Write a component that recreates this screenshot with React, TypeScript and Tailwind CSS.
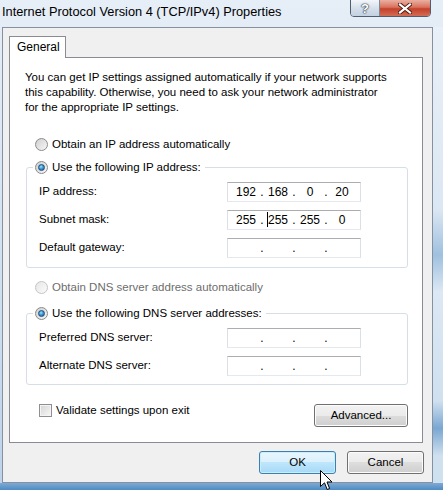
import React from 'react';

const font = "font-['Liberation_Sans',Arial,sans-serif]";

function Radio({ checked, disabled }: { checked?: boolean; disabled?: boolean }) {
  return (
    <span
      className={
        'relative inline-flex items-center justify-center w-[13px] h-[13px] rounded-full border shrink-0 ' +
        (disabled
          ? 'border-[#c4c4c4] bg-linear-to-br from-[#e6e6e6] to-[#fbfbfb]'
          : 'border-[#8a8a8a] bg-linear-to-br from-[#cfcfcf] to-[#f8f8f8]')
      }
    >
      {checked && (
        <span className="w-[7px] h-[7px] rounded-full border border-[#1d4d7a] bg-[radial-gradient(circle_at_40%_35%,#9be3ff_0%,#3e9ad4_45%,#1b5a8f_100%)]" />
      )}
    </span>
  );
}

function IpBox({ parts, caret }: { parts: string[]; caret?: number }) {
  return (
    <div className="flex items-center w-[134px] h-[20px] border border-[#abadb3] border-l-[#dbdfe6] border-r-[#dbdfe6] border-b-[#e3e9ef] bg-white pl-[4px] pr-[4px] leading-none text-[12px]">
      {parts.map((p, i) => (
        <React.Fragment key={i}>
          {i > 0 && <span className="w-[4px] flex justify-center">.</span>}
          <span className="w-[28px] flex justify-center">
            <span className="relative">
              {caret === i && <span className="absolute left-[-1px] top-[-2px] w-px h-[15px] bg-black" />}
              {p}
            </span>
          </span>
        </React.Fragment>
      ))}
    </div>
  );
}

function Row({ label, parts, caret }: { label: string; parts: string[]; caret?: number }) {
  return (
    <div className="flex items-center h-[20px]">
      <span className="w-[200px] pl-[12px]">{label}</span>
      <IpBox parts={parts} caret={caret} />
    </div>
  );
}

function Btn({ children, hot }: { children: React.ReactNode; hot?: boolean }) {
  return (
    <button
      className={
        'h-[23px] rounded-[3px] border flex items-center justify-center ' +
        (hot
          ? 'border-[#3c7fb1] bg-[linear-gradient(to_bottom,#eaf6fd_0%,#d9f0fc_50%,#bee6fd_50%,#a7d9f5_100%)] shadow-[inset_0_0_0_1px_#c8eefc]'
          : 'border-[#707070] bg-[linear-gradient(to_bottom,#f2f2f2_0%,#ebebeb_50%,#dddddd_50%,#cfcfcf_100%)] shadow-[inset_0_0_0_1px_#fcfcfc]')
      }
    >
      {children}
    </button>
  );
}

export default function App() {
  const empty = ['', '', '', ''];
  return (
    <div className={`${font} text-[11.5px] text-black relative w-[443px] h-[490px] overflow-hidden flex flex-col bg-linear-to-b from-[#e6eef7] via-[#d3e2f1] to-[#bcd3ea]`}>
      {/* Title bar */}
      <div className="h-[27px] flex items-start">
        <div className="flex-1 pl-[2px] pt-[4px] leading-[16px] text-[12.8px]">Internet Protocol Version 4 (TCP/IPv4) Properties</div>
        <div className="flex mr-[12px] -mt-px h-[18px] rounded-b-[4px] border border-[#4f5d6e] overflow-hidden">
          <div className="w-[29px] flex items-center justify-center bg-linear-to-b from-[#f3f6fa] via-[#d6e0eb] to-[#c3d1e0] border-r border-[#7f8a98]">
            <span className="text-white font-bold text-[13px] leading-none [text-shadow:0_0_1px_#2b3a4c,0_0_1px_#2b3a4c,0_0_2px_#2b3a4c]">?</span>
          </div>
          <div className="w-[50px] flex items-center justify-center bg-[linear-gradient(to_bottom,#eab0a2_0%,#d9725c_45%,#c4412a_55%,#d36d55_100%)]">
            <svg width="14" height="11" viewBox="0 0 14 11">
              <path d="M2 1.5 L12 9.5 M12 1.5 L2 9.5" stroke="#4a1a12" strokeWidth="4" strokeLinecap="square" />
              <path d="M2 1.5 L12 9.5 M12 1.5 L2 9.5" stroke="#ffffff" strokeWidth="2.2" strokeLinecap="square" />
            </svg>
          </div>
        </div>
      </div>

      <div className="flex">
        <div className="w-[2px]" />
        {/* Client area */}
        <div className="w-[431px] h-[456px] border border-[#8591a1] bg-[#f0f0f0] flex flex-col">
          {/* Tabs */}
          <div className="pt-[8px] pl-[6px] flex">
            <div className="relative z-10 w-[57px] h-[22px] -mb-px border border-b-0 border-[#898c95] bg-white pl-[7px] pt-[3px] leading-[14px] text-[12px]">General</div>
          </div>
          {/* Tab page */}
          <div className="ml-[6px] w-[414px] h-[386px] border border-[#898c95] bg-white flex flex-col">
            <p className="mt-[12px] pl-[15px] leading-[15px]">
              You can get IP settings assigned automatically if your network supports
              <br />
              this capability. Otherwise, you need to ask your network administrator
              <br />
              for the appropriate IP settings.
            </p>

            <div className="mt-[21px] pl-[25px] h-[17px] flex items-center gap-[4px]">
              <Radio />
              <span>Obtain an IP address automatically</span>
            </div>

            <fieldset className="mt-[6px] ml-[16px] w-[382px] border border-[#d5dfe5] rounded-[3px] pb-[9px]">
              <legend className="ml-[6px] px-[2px] h-[17px]">
                <span className="flex items-center gap-[4px] h-[17px] pr-[2px]">
                  <Radio checked />
                  <span>Use the following IP address:</span>
                </span>
              </legend>
              <div className="mt-[6px] flex flex-col gap-[8px]">
                <Row label="IP address:" parts={['192', '168', '0', '20']} />
                <Row label="Subnet mask:" parts={['255', '255', '255', '0']} caret={1} />
                <Row label="Default gateway:" parts={empty} />
              </div>
            </fieldset>

            <div className="mt-[11px] pl-[25px] h-[17px] flex items-center gap-[4px] text-[#6d6d6d]">
              <Radio disabled />
              <span>Obtain DNS server address automatically</span>
            </div>

            <fieldset className="mt-[9px] ml-[16px] w-[382px] border border-[#d5dfe5] rounded-[3px] pb-[8px]">
              <legend className="ml-[6px] px-[2px] h-[17px]">
                <span className="flex items-center gap-[4px] h-[17px] pr-[2px]">
                  <Radio checked />
                  <span>Use the following DNS server addresses:</span>
                </span>
              </legend>
              <div className="mt-[6px] flex flex-col gap-[8px]">
                <Row label="Preferred DNS server:" parts={empty} />
                <Row label="Alternate DNS server:" parts={empty} />
              </div>
            </fieldset>

            <div className="mt-[19px] flex items-start pl-[29px] pr-[14px]">
              <div className="flex items-center gap-[4px] h-[13px] flex-1">
                <span className="w-[13px] h-[13px] border border-[#8f8f8f] bg-linear-to-br from-[#d4d4d4] to-[#f8f8f8] shadow-[inset_0_0_0_1px_#f4f4f4]" />
                <span>Validate settings upon exit</span>
              </div>
              <div className="w-[94px]">
                <Btn>
                  <span className="w-[92px] text-center">Advanced...</span>
                </Btn>
              </div>
            </div>
          </div>

          {/* Dialog buttons */}
          <div className="mt-[8px] flex justify-end gap-[11px] pr-[8px]">
            <div className="w-[77px] flex flex-col"><Btn hot>OK</Btn></div>
            <div className="w-[77px] flex flex-col"><Btn>Cancel</Btn></div>
          </div>
        </div>
        <div className="flex-1 bg-[linear-gradient(to_bottom,#e9f0f7_0%,#dbe7f3_40%,#9fc0df_50%,#dce8f3_58%,#d0e0ef_82%,#7aa7d2_88%,#cfe0ef_94%)]" />
      </div>
      <div className="flex-1 bg-linear-to-b from-[#7eaad3] to-[#4f8bc3]" />

      {/* mouse pointer */}
      <svg className="absolute left-[320px] top-[470px]" width="13" height="21" viewBox="0 0 13 21">
        <path d="M0.5 0.5 L0.5 16.5 L4.5 12.8 L7.2 19.5 L9.6 18.5 L7 12 L12 12 Z" fill="#ffffff" stroke="#000000" strokeWidth="1" strokeLinejoin="miter" />
      </svg>
    </div>
  );
}
